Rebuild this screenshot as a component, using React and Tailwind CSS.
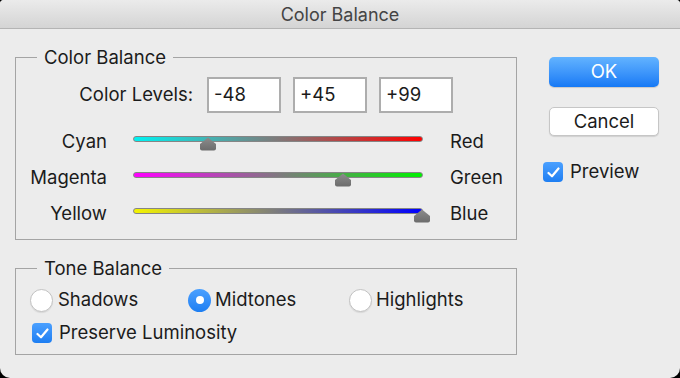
const font = { fontFamily: 'Inter, "Open Sans", "Liberation Sans", sans-serif' };

const sliders = [
  { left: 'Cyan', right: 'Red', value: -48, track: 'bg-[linear-gradient(to_right,#00f2f2,#ff0000)]' },
  { left: 'Magenta', right: 'Green', value: 45, track: 'bg-[linear-gradient(to_right,#ff00ff,#00f000)]' },
  { left: 'Yellow', right: 'Blue', value: 99, track: 'bg-[linear-gradient(to_right,#f4f400,#0000ff)]' },
];

function Check({ size = 20 }) {
  return (
    <span
      className="flex items-center justify-center rounded-[4px] bg-gradient-to-b from-[#4aa0ff] to-[#1d7ef2] shrink-0"
      style={{ width: size, height: size }}
    >
      <svg width="13" height="11" viewBox="0 0 13 11" fill="none">
        <path d="M1.5 6 L5 9.3 L11.5 1.5" stroke="white" strokeWidth="2.2" strokeLinecap="round" strokeLinejoin="round" />
      </svg>
    </span>
  );
}

function Radio({ checked }) {
  if (checked) {
    return (
      <span className="flex items-center justify-center w-[23px] h-[23px] rounded-full bg-gradient-to-b from-[#4aa0ff] to-[#1d7ef2] shrink-0">
        <span className="w-[8px] h-[8px] rounded-full bg-white" />
      </span>
    );
  }
  return <span className="w-[23px] h-[23px] rounded-full bg-white border border-[#c2c2c2] shadow-[0_1px_1px_rgba(0,0,0,0.08)] shrink-0" />;
}

function Thumb() {
  return (
    <svg width="17" height="14" viewBox="0 0 17 14">
      <defs>
        <linearGradient id="tg" x1="0" y1="0" x2="0" y2="1">
          <stop offset="0" stopColor="#8c8c8c" />
          <stop offset="1" stopColor="#6c6c6c" />
        </linearGradient>
      </defs>
      <path d="M8.5 0.5 L16.5 7 V11.5 Q16.5 13.5 14.5 13.5 H2.5 Q0.5 13.5 0.5 11.5 V7 Z" fill="url(#tg)" />
    </svg>
  );
}

function SliderRow({ left, right, value, track }) {
  const pct = ((value + 100) / 200) * 100;
  return (
    <div className="flex items-center h-[36px]">
      <div className="w-[91px] text-right">{left}</div>
      <div className="relative ml-[26px] w-[290px] h-[12px]">
        <div className={`h-[6px] rounded-full border border-[#858585] ${track}`} />
        <div className="absolute top-[1px] -translate-x-1/2" style={{ left: `${pct}%` }}>
          <Thumb />
        </div>
      </div>
      <div className="ml-[27px]">{right}</div>
    </div>
  );
}

export default function App() {
  return (
    <div className="w-[680px] h-[378px] bg-black text-[18.5px] text-[#1b1b1b]" style={font}>
      <div className="h-full bg-[#ececec] rounded-t-[4px] rounded-b-[10px] overflow-hidden flex flex-col">
        <div className="h-[29px] border-b border-[#b4b4b4] bg-gradient-to-b from-[#ebebeb] to-[#d4d4d4] flex items-center justify-center text-[18px] text-[#444]">
          Color Balance
        </div>

        <div className="flex pl-[15px] pt-[17px]">
          <div className="w-[502px]">
            <fieldset className="border border-[#a4a4a4] pb-[7px]">
              <legend className="ml-[21px] px-[7px] leading-[22px]">Color Balance</legend>
              <div className="flex items-center mt-[9px]">
                <div className="w-[177px] text-right">Color Levels:</div>
                <div className="flex gap-[12px] ml-[14px]">
                  {['-48', '+45', '+99'].map((v) => (
                    <div key={v} className="w-[74px] h-[36px] bg-white border-2 border-[#adadad] pl-[5px] flex items-center">
                      {v}
                    </div>
                  ))}
                </div>
              </div>
              <div className="mt-[11px]">
                {sliders.map((s) => (
                  <SliderRow key={s.left} {...s} />
                ))}
              </div>
            </fieldset>

            <fieldset className="border border-[#a4a4a4] mt-[17px] pb-[10px]">
              <legend className="ml-[21px] px-[7px] leading-[22px]">Tone Balance</legend>
              <div className="flex items-center h-[24px] mt-[9px] pl-[14px]">
                <div className="w-[158px] flex items-center gap-[5px]">
                  <Radio />
                  <span>Shadows</span>
                </div>
                <div className="w-[161px] flex items-center gap-[4px]">
                  <Radio checked />
                  <span>Midtones</span>
                </div>
                <div className="flex items-center gap-[4px]">
                  <Radio />
                  <span>Highlights</span>
                </div>
              </div>
              <div className="flex items-center h-[22px] mt-[10px] pl-[16px] gap-[7px]">
                <Check />
                <span>Preserve Luminosity</span>
              </div>
            </fieldset>
          </div>

          <div className="ml-[32px] mt-[11px] w-[110px] flex flex-col">
            <button className="h-[30px] rounded-[5px] bg-gradient-to-b from-[#62b3ff] to-[#1579f5] text-white shadow-[0_1px_1px_rgba(0,0,0,0.15)]">
              OK
            </button>
            <button className="h-[29px] mt-[20px] rounded-[5px] bg-white border border-[#c6c6c6] shadow-[0_1px_1px_rgba(0,0,0,0.12)]">
              Cancel
            </button>
            <div className="flex items-center h-[22px] mt-[25px] -ml-[6px] gap-[7px]">
              <Check />
              <span>Preview</span>
            </div>
          </div>
        </div>
      </div>
    </div>
  );
}
